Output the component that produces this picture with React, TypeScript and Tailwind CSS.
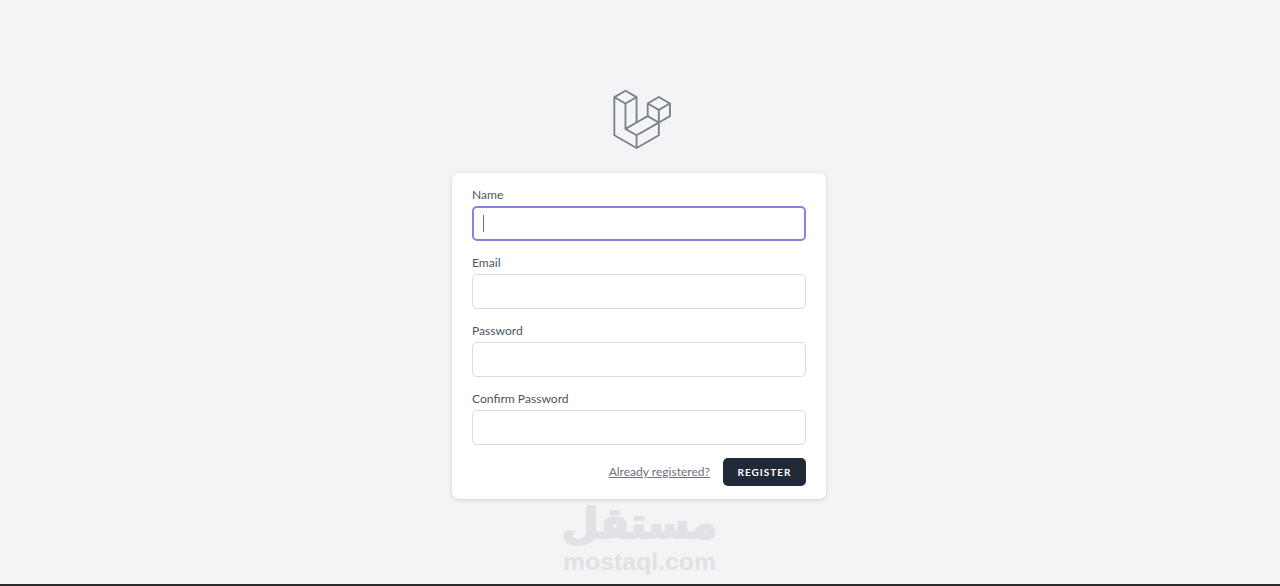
const LOGO_PATH =
  "M305.8 81.125C305.77 80.995 305.69 80.885 305.65 80.755C305.56 80.525 305.49 80.285 305.37 80.075C305.29 79.935 305.17 79.815 305.07 79.685C304.94 79.515 304.83 79.325 304.68 79.175C304.55 79.045 304.39 78.955 304.25 78.845C304.09 78.715 303.95 78.575 303.77 78.475L251.32 48.275C249.97 47.495 248.31 47.495 246.96 48.275L194.51 78.475C194.33 78.575 194.19 78.725 194.03 78.845C193.89 78.955 193.73 79.045 193.6 79.175C193.45 79.325 193.34 79.515 193.21 79.685C193.11 79.815 192.99 79.935 192.91 80.075C192.79 80.285 192.71 80.525 192.63 80.755C192.58 80.875 192.51 80.995 192.48 81.125C192.38 81.495 192.33 81.875 192.33 82.265V139.625L148.62 164.795V52.575C148.62 52.185 148.57 51.805 148.47 51.435C148.44 51.305 148.36 51.195 148.32 51.065C148.23 50.835 148.16 50.595 148.04 50.385C147.96 50.245 147.84 50.125 147.74 49.995C147.61 49.825 147.5 49.635 147.35 49.485C147.22 49.355 147.06 49.265 146.92 49.155C146.76 49.025 146.62 48.885 146.44 48.785L93.99 18.585C92.64 17.805 90.98 17.805 89.63 18.585L37.18 48.785C37 48.885 36.86 49.035 36.7 49.155C36.56 49.265 36.4 49.355 36.27 49.485C36.12 49.635 36.01 49.825 35.88 49.995C35.78 50.125 35.66 50.245 35.58 50.385C35.46 50.595 35.38 50.835 35.3 51.065C35.25 51.185 35.18 51.305 35.15 51.435C35.05 51.805 35 52.185 35 52.575V232.235C35 233.795 35.84 235.245 37.19 236.025L142.1 296.425C142.33 296.555 142.58 296.635 142.83 296.725C142.95 296.765 143.06 296.835 143.18 296.865C143.55 296.965 143.93 297.015 144.31 297.015C144.69 297.015 145.07 296.965 145.44 296.865C145.56 296.835 145.66 296.775 145.78 296.725C146.03 296.635 146.28 296.555 146.51 296.425L251.42 236.025C252.77 235.245 253.61 233.805 253.61 232.235V174.875L303.87 145.935C305.22 145.155 306.06 143.715 306.06 142.145V82.265C305.95 81.875 305.9 81.495 305.8 81.125ZM144.2 227.205L100.57 202.515L146.39 176.135L196.66 147.195L240.33 172.335L208.29 190.625L144.2 227.205ZM244.75 114.995V164.795L226.39 154.225L201.03 139.625V89.825L219.39 100.395L244.75 114.995ZM249.12 57.105L292.81 82.265L249.12 107.425L205.43 82.265L249.12 57.105ZM114.49 184.425L96.13 194.995V85.305L121.49 70.705L139.85 60.135V169.815L114.49 184.425ZM91.76 27.425L135.45 52.585L91.76 77.745L48.07 52.585L91.76 27.425ZM43.67 60.135L62.03 70.705L87.39 85.305V202.545V202.555V202.565C87.39 202.735 87.44 202.895 87.46 203.055C87.49 203.265 87.49 203.485 87.55 203.695V203.705C87.6 203.875 87.69 204.035 87.76 204.195C87.84 204.375 87.89 204.575 87.99 204.745C87.99 204.745 87.99 204.755 88 204.755C88.09 204.905 88.22 205.035 88.33 205.175C88.45 205.335 88.55 205.495 88.69 205.635L88.7 205.645C88.82 205.765 88.98 205.855 89.12 205.965C89.28 206.085 89.42 206.225 89.59 206.325C89.6 206.325 89.6 206.325 89.61 206.335C89.62 206.335 89.62 206.345 89.63 206.345L139.87 234.775V285.065L43.67 229.705V60.135ZM244.75 229.705L148.58 285.075V234.775L219.8 194.115L244.75 179.875V229.705ZM297.2 139.625L253.49 164.795V114.995L278.85 100.395L297.21 89.825V139.625H297.2Z"

function Field({ label, focused }: { label: string; focused?: boolean }) {
  return (
    <label className="block">
      <span className="block h-[18px] text-[12.1px] leading-[18px] text-[#4b5563]">{label}</span>
      <span
        className={
          focused
            ? "mt-[2px] flex h-[35px] w-full items-center rounded-[5px] border-2 border-[#8486dc] bg-white pl-[9px]"
            : "mt-[2px] flex h-[35px] w-full items-center rounded-[5px] border border-[#d8dbe0] bg-white"
        }
      >
        {focused ? <span className="h-[17px] w-px bg-[#6b7280]" /> : null}
      </span>
    </label>
  )
}

export default function App() {
  return (
    <div className="relative flex h-[586px] flex-col items-center overflow-hidden border-b-2 border-[#2a2a2c] bg-[#f3f4f6] pt-[86px] font-['Lato',sans-serif]">
      <svg viewBox="0 0 316 316" className="mr-[2px] size-[67px] fill-[#7b818c]" aria-hidden="true">
        <path d={LOGO_PATH} />
      </svg>

      <form className="mt-[20px] mr-[2px] h-[326px] w-[374px] rounded-[7px] bg-white px-[20px] pt-[13px] shadow-[0_1px_4px_rgba(0,0,0,0.14)]">
        <div className="flex flex-col gap-[13px]">
          <Field label="Name" focused />
          <Field label="Email" />
          <Field label="Password" />
          <Field label="Confirm Password" />
        </div>
        <div className="mt-[13px] flex items-center justify-end gap-[13px]">
          <a className="text-[12.05px] text-[#6b7280] underline">Already registered?</a>
          <button
            type="button"
            className="h-[28px] w-[83px] rounded-[5px] bg-[#1f2937] text-[10px] font-bold tracking-[0.1em] text-white"
          >
            REGISTER
          </button>
        </div>
      </form>

      <div className="absolute top-[499px] left-[563px] flex w-[153px] flex-col items-center text-[#e0e2e5]">
        <span dir="rtl" className="font-['DejaVu_Sans',sans-serif] text-[42.5px] leading-[50px] font-bold [-webkit-text-stroke:2px_#e0e2e5]">
          مستقل
        </span>
        <span className="font-['Liberation_Sans',sans-serif] text-[24.8px] leading-[25px] font-bold">mostaql.com</span>
      </div>
    </div>
  )
}
